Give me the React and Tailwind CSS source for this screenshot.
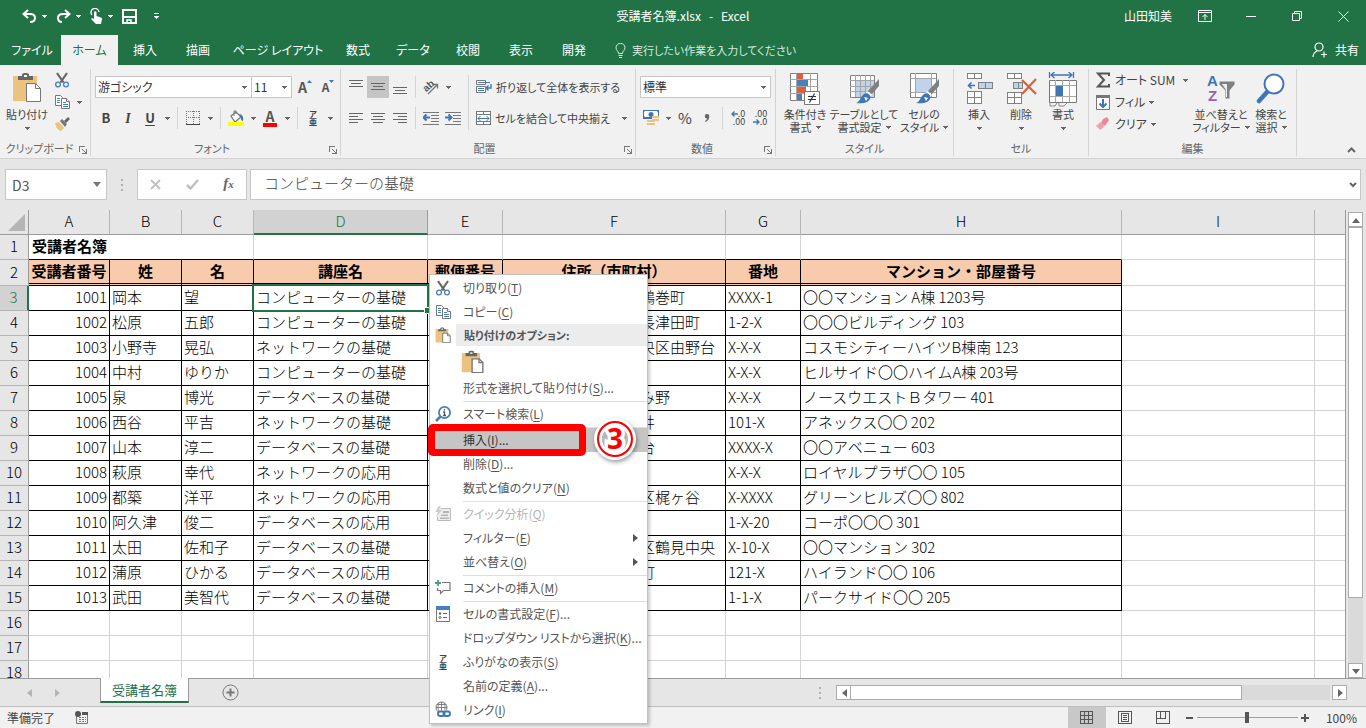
import clsx from "clsx";

const tabs = [
  { name: "ファイル", w: "w-[58px]" },
  { name: "ホーム", w: "w-[57px]", active: true },
  { name: "挿入", w: "w-[54px]" },
  { name: "描画", w: "w-[52px]" },
  { name: "ページ レイアウト", w: "w-[108px]" },
  { name: "数式", w: "w-[52px]" },
  { name: "データ", w: "w-[58px]" },
  { name: "校閲", w: "w-[52px]" },
  { name: "表示", w: "w-[54px]" },
  { name: "開発", w: "w-[52px]" },
];

const columns = [
  { id: "A", w: "w-[81px]" },
  { id: "B", w: "w-[72px]" },
  { id: "C", w: "w-[72px]" },
  { id: "D", w: "w-[174px]" },
  { id: "E", w: "w-[75px]" },
  { id: "F", w: "w-[223px]" },
  { id: "G", w: "w-[75px]" },
  { id: "H", w: "w-[321px]" },
  { id: "I", w: "w-[193px]" },
  { id: "", w: "w-auto" },
];

const headings = ["受講者番号", "姓", "名", "講座名", "郵便番号", "住所（市町村）", "番地", "マンション・部屋番号"];

const members = [
  [1001, "岡本", "望", "コンピューターの基礎", "", "東京都新宿区早稲田鶴巻町", "XXXX-1", "〇〇マンション A棟 1203号"],
  [1002, "松原", "五郎", "コンピューターの基礎", "", "神奈川県横浜市緑区長津田町", "1-2-X", "〇〇〇ビルディング 103"],
  [1003, "小野寺", "晃弘", "ネットワークの基礎", "", "神奈川県相模原市中央区由野台", "X-X-X", "コスモシティーハイツB棟南 123"],
  [1004, "中村", "ゆりか", "コンピューターの基礎", "", "", "X-X-X", "ヒルサイド〇〇ハイムA棟 203号"],
  [1005, "泉", "博光", "データベースの基礎", "", "神奈川県大和市つきみ野", "X-X-X", "ノースウエストＢタワー 401"],
  [1006, "西谷", "平吉", "ネットワークの基礎", "", "神奈川県大井町上大井", "101-X", "アネックス〇〇 202"],
  [1007, "山本", "淳二", "データベースの基礎", "", "神奈川県大和市緑野台", "XXXX-X", "〇〇アベニュー 603"],
  [1008, "萩原", "幸代", "ネットワークの応用", "", "", "X-X-X", "ロイヤルプラザ〇〇 105"],
  [1009, "都築", "洋平", "ネットワークの応用", "", "神奈川県川崎市高津区梶ヶ谷", "X-XXXX", "グリーンヒルズ〇〇 802"],
  [1010, "阿久津", "俊二", "データベースの応用", "", "", "1-X-20", "コーポ〇〇〇 301"],
  [1011, "太田", "佐和子", "データベースの基礎", "", "神奈川県横浜市鶴見区鶴見中央", "X-10-X", "〇〇マンション 302"],
  [1012, "蒲原", "ひかる", "データベースの応用", "", "神奈川県小田原市栄町", "121-X", "ハイランド〇〇 106"],
  [1013, "武田", "美智代", "データベースの基礎", "", "", "1-1-X", "パークサイド〇〇 205"],
];

const menu = [
  { label: "切り取り", k: "T", icon: <CutIcon /> },
  { label: "コピー", k: "C", icon: <CopyIcon /> },
  { header: "貼り付けのオプション:", icon: <PasteIcon size={16} /> },
  { paste: true },
  { label: "形式を選択して貼り付け", k: "S", dots: true },
  { sep: true },
  { label: "スマート検索", k: "L", icon: <SmartIcon /> },
  { sep: true },
  { label: "挿入", k: "I", dots: true, active: true },
  { label: "削除", k: "D", dots: true },
  { label: "数式と値のクリア", k: "N" },
  { sep: true },
  { label: "クイック分析", k: "Q", icon: <QuickIcon />, disabled: true },
  { label: "フィルター", k: "E", sub: true },
  { label: "並べ替え", k: "O", sub: true },
  { sep: true },
  { label: "コメントの挿入", k: "M", icon: <CommentIcon /> },
  { sep: true },
  { label: "セルの書式設定", k: "F", dots: true, icon: <FormatDialogIcon /> },
  { label: "ドロップダウン リストから選択", k: "K", dots: true },
  { label: "ふりがなの表示", k: "S", icon: <RubyIcon /> },
  { label: "名前の定義", k: "A", dots: true },
  { label: "リンク", k: "I", icon: <LinkIcon /> },
];

/* ---------- icons ---------- */

function Arrow({ className }) {
  return (
    <svg className={clsx("shrink-0", className)} width="5" height="3" viewBox="0 0 5 3" fill="currentColor" shapeRendering="crispEdges">
      <path d="M0 0h5v1H4v1H3v1H2V2H1V1H0z" />
    </svg>
  );
}

function Triangle({ dir = "left" }) {
  const d = { left: "M5 0v8L0 4z", right: "M0 0v8l5-4z", up: "M0 5h8L4 0z", down: "M0 0h8L4 5z" }[dir];
  return (
    <svg width="8" height="8" viewBox={dir === "left" || dir === "right" ? "-2 0 8 8" : "0 -2 8 8"} fill="currentColor">
      <path d={d} />
    </svg>
  );
}

function CutIcon() {
  return (
    <svg width="16" height="16" viewBox="0 0 16 16" fill="none">
      <path d="M3 1l6.5 9.5M13 1L6.500 10.500" stroke="#666" strokeWidth="2.2" />
      <circle cx="4" cy="12.500" r="2.400" stroke="#4a80b8" strokeWidth="1.300" />
      <circle cx="12" cy="12.500" r="2.400" stroke="#4a80b8" strokeWidth="1.300" />
    </svg>
  );
}

function CopyIcon() {
  return (
    <svg width="16" height="16" viewBox="0 0 16 16" fill="#fff">
      <path d="M1.500 1.500h5l2 2v8h-7z" stroke="#777" />
      <path d="M3 4.500h3M3 6.500h3M3 8.500h3" stroke="#4a80b8" />
      <path d="M7.500 4.500h5l3 3v7h-8z" stroke="#777" />
      <path d="M12.500 4.500v3h3" stroke="#777" />
      <path d="M9 8.500h3M9 10.500h5M9 12.500h5" stroke="#4a80b8" />
    </svg>
  );
}

function BrushIcon() {
  return (
    <svg width="17" height="16" viewBox="0 0 17 16">
      <path d="M1 7l4-1 5 6-3 3c-2 0-5-3-6-8z" fill="#ecc27f" />
      <path d="M6 5l2-2 5 5-2 3z" fill="#777" />
      <path d="M10 5l4-4 2 2-4 4z" fill="#666" />
    </svg>
  );
}

function PasteIcon({ size = 30 }) {
  return (
    <svg width={size} height={size} viewBox="0 0 30 30">
      <path d="M1 4h24v25H1z" fill="#ecc27f" />
      <path d="M6 8V4h4V2l2-1h3l2 1v2h4v4z" fill="#666" />
      <path d="M12 3h3v2h-3z" fill="#f1f1f1" />
      <path d="M14.500 11.500h9l5 5v13h-14z" fill="#fff" stroke="#777" strokeWidth={size > 24 ? 1 : 1.800} />
      <path d="M23.500 11.500v5h5" fill="none" stroke="#777" strokeWidth={size > 24 ? 1 : 1.800} />
    </svg>
  );
}

function SmartIcon() {
  return (
    <svg width="16" height="16" viewBox="0 0 16 16" fill="none">
      <circle cx="9.500" cy="6.500" r="5.600" stroke="#4a80b8" strokeWidth="1.800" />
      <path d="M5.500 10.500L1 15" stroke="#4a80b8" strokeWidth="2.600" />
      <path d="M9.500 5.500V10M9.500 3v1.500M8 6h1.500M8 9.500h3" stroke="#555" strokeWidth="1.300" />
    </svg>
  );
}

function QuickIcon() {
  return (
    <svg width="16" height="16" viewBox="0 0 16 16">
      <path d="M5.500 2.500h10v12h-13v-4" fill="#eee" stroke="#bbb" />
      <path d="M8 5h6v2H8zM6 8.500h7v1.500H6zM5 11.500h9V13H5z" fill="#b5b5b5" />
      <path d="M4 0L0 6h3l-2 5 6-7H4l2-4z" fill="#ccc" />
    </svg>
  );
}

function CommentIcon() {
  return (
    <svg width="16" height="16" viewBox="0 0 16 16" fill="none">
      <path d="M7 2.500h8v8H8.500L5.500 13.500v-3h-3V8" stroke="#777" strokeWidth="1.200" />
      <path d="M3 0v6M0 3h6" stroke="#4f9f7c" strokeWidth="1.800" />
    </svg>
  );
}

function FormatDialogIcon() {
  return (
    <svg width="16" height="16" viewBox="0 0 16 16">
      <path d="M1.500 1.500h13v14h-13z" fill="#fff" stroke="#777" />
      <path d="M1 0h14v4H1z" fill="#4a80b8" />
      <circle cx="5" cy="7.500" r="1.200" fill="#666" />
      <circle cx="5" cy="11.500" r="1" fill="#fff" stroke="#666" />
      <path d="M8 7.500h4M8 11.500h4" stroke="#666" />
    </svg>
  );
}

function RubyIcon() {
  return (
    <span className="flex flex-col items-center text-[8px] leading-[8px] font-bold text-[#444]">
      <span>ア</span>
      <span>亜</span>
    </span>
  );
}

function LinkIcon() {
  return (
    <svg width="16" height="17" viewBox="0 0 16 17" fill="none">
      <circle cx="6.500" cy="6.500" r="5.500" stroke="#777" />
      <path d="M1 6.500h11M6.500 1v9M2 3.500h9M4 2c-1.500 3-1.500 6 0 8M9 2c1.500 3 1.500 6 0 8" stroke="#777" strokeWidth=".9" />
      <rect x="2" y="9.500" width="14" height="6.500" rx="3" fill="#fff" />
      <rect x="3" y="10.500" width="6.500" height="4.500" rx="2.200" stroke="#3f76b5" strokeWidth="1.900" />
      <rect x="8.500" y="10.500" width="6.500" height="4.500" rx="2.200" stroke="#3f76b5" strokeWidth="1.900" />
    </svg>
  );
}

function Lines({ rows }) {
  return (
    <svg width="14" height="14" viewBox="0 0 14 14" shapeRendering="crispEdges" stroke="#666">
      {rows.map(([x, y, w]) => (
        <path key={y} d={`M${x} ${y + 0.5}h${w}`} />
      ))}
    </svg>
  );
}

function IndentIcon({ right }) {
  return (
    <svg width="16" height="14" viewBox="0 0 16 14" fill="none" stroke="#777" shapeRendering="crispEdges">
      <path d="M0 1.500h16M8 4.500h8M8 7.500h8M8 10.500h8M0 13.500h16" />
      <path d={right ? "M0 6.500h5M3.500 3.500l3 3-3 3" : "M7 6.500H2M3.500 3.500l-3 3 3 3"} stroke="#3f76b5" strokeWidth="2" shapeRendering="auto" />
    </svg>
  );
}

function OrientationIcon() {
  return (
    <svg width="18" height="18" viewBox="0 0 18 18">
      <path d="M6 16L15 7M11.500 6.500H15.500V10.500" fill="none" stroke="#777" strokeWidth="1.300" />
      <text x="2" y="12" fontSize="10" fontWeight="700" fill="#555" transform="rotate(-42 6 10)" fontFamily="Liberation Sans">ab</text>
    </svg>
  );
}

function WrapIcon() {
  return (
    <svg width="17" height="16" viewBox="0 0 17 16" fill="none">
      <path d="M1.500 1.500h9v4h-9zM1.500 7.500h9v6h-9z" stroke="#777" fill="#fff" />
      <path d="M3 3.500h12M3 9.500h6M3 11.500h6" stroke="#3f76b5" />
      <path d="M16 5v4h-4M13.500 6.500l-2.500 2.500 2.500 2.500" stroke="#3f76b5" strokeWidth="1.400" />
    </svg>
  );
}

function MergeIcon() {
  return (
    <svg width="16" height="16" viewBox="0 0 16 16" fill="none" shapeRendering="crispEdges">
      <path d="M1.500 1.500h14v13h-14zM1.500 4.500h14M1.500 11.500h14M8.500 1.500v3M8.500 11.500v3" stroke="#777" fill="#fff" />
      <path d="M3 8.500h11M5.500 6L3 8.500 5.500 11M11.500 6L14 8.500 11.500 11" stroke="#3f76b5" fill="none" shapeRendering="auto" />
    </svg>
  );
}

function CurrencyIcon() {
  return (
    <svg width="17" height="16" viewBox="0 0 17 16">
      <path d="M0 0h16v9H0z" fill="#3f76b5" />
      <path d="M2 1h12l1 2v4H2L1 6V2z" fill="#fff" />
      <circle cx="8" cy="4.500" r="2.500" fill="#3f76b5" />
      <path d="M9 6h7v5H9zM4 10h8v5H4z" fill="#ecc27f" />
      <path d="M9 8.500h7M4 12.500h8" stroke="#fff" strokeWidth=".8" />
    </svg>
  );
}

function DecimalIcon({ dec }) {
  return (
    <span className="flex flex-col text-[9px] leading-[8px] text-[#444]">
      <span className={clsx("flex items-center", dec ? "justify-end" : "justify-between")}>
        {!dec && <SmallArrow />}
        {dec ? ".00" : ".0"}
      </span>
      <span className={clsx("flex items-center", dec ? "justify-between" : "justify-end")}>
        {dec && <SmallArrow right />}
        {dec ? ".0" : ".00"}
      </span>
    </span>
  );
}

function SmallArrow({ right }) {
  return (
    <svg width="7" height="6" viewBox="0 0 7 6" fill="none" stroke="#3f76b5" strokeWidth="1.400">
      <path d={right ? "M0 3h6M3.500.5L6 3 3.500 5.500" : "M7 3H1M3.500.5L1 3l2.500 2.500"} />
    </svg>
  );
}

function CondIcon() {
  return (
    <svg width="32" height="34" viewBox="0 0 32 34">
      <path d="M1.500 1.500h27v27h-27z" fill="#fff" stroke="#808080" />
      <path d="M1 7.500h28M1 14.500h28M1 21.500h28M7.500 1v28M21.500 1v28" stroke="#a5a5a5" />
      <path d="M8 2h6v5H8zM8 15h9v6H8z" fill="#dd5f3d" />
      <path d="M8 8h11v6H8zM8 22h5v6H8z" fill="#4a80b8" />
      <path d="M15.500 19.500h15v13h-15z" fill="#fff" stroke="#777" />
      <path d="M19 24.500h8M19 27.500h8M25.500 21.500l-5 9" stroke="#333" strokeWidth="1.200" />
    </svg>
  );
}

function TableBrushIcon({ cellStyle }) {
  return (
    <svg width="32" height="32" viewBox="0 0 32 32">
      <path d={cellStyle ? "M2.500 1.500h26v24h-26z" : "M2.500 3.500h24v22h-24z"} fill="#fff" stroke="#808080" />
      {cellStyle ? (
        <>
          <path d="M8 7h15v14H8z" fill="#bfd3ea" />
          <path d="M7.500 1v24M23.500 1v24M2 6.500h26M2 20.500h26" stroke="#a5a5a5" />
        </>
      ) : (
        <>
          <path d="M8 9h18v16H8z" fill="#bfd3ea" />
          <path d="M7.500 3v22M12.500 3v22M17.500 3v22M22.500 3v22M2 8.500h24M2 14.500h24M2 19.500h24" stroke="#a5a5a5" />
        </>
      )}
      <path d="M31 7v7l-7 8-4-3z" fill="#808080" />
      <path d="M19 19l5 4-2 2-4-4z" fill="#fff" />
      <path d="M8 31c4-1 4-6 8-9 3-2 8 1 6 5-2 4-8 5-14 4z" fill="#3f76b5" />
      <path d="M16 25l4 1-2 3z" fill="#fff" />
    </svg>
  );
}

function InsertIcon() {
  return (
    <svg width="30" height="32" viewBox="0 0 30 32" fill="#fff" stroke="#808080" shapeRendering="crispEdges">
      <path d="M3.500 1.500h14v5h-14zM10.500 1.500v5M3.500 19.500h14v12h-14zM10.500 19.500v12M3.500 25.500h14" />
      <path d="M14.500 10.500h14v6h-14zM21.500 10.500v6" fill="#bfd3ea" />
      <path d="M11 13.500H5M7.500 10.500l-3 3 3 3" fill="none" stroke="#3f76b5" strokeWidth="1.600" shapeRendering="auto" />
    </svg>
  );
}

function DeleteIcon() {
  return (
    <svg width="32" height="32" viewBox="0 0 32 32" fill="#fff" stroke="#808080">
      <g shapeRendering="crispEdges">
        <path d="M2.500 1.500h14v5h-14zM9.500 1.500v5M2.500 20.500h14v11h-14zM9.500 20.500v11M2.500 25.500h14" />
        <path d="M8.500 10.500h9v6h-9zM13.500 10.500v6" fill="#bfd3ea" />
      </g>
      <path d="M17 8l14 14M31 7L17 22" fill="none" stroke="#dd5f3d" strokeWidth="2.200" />
    </svg>
  );
}

function FormatIcon() {
  return (
    <svg width="30" height="35" viewBox="0 0 30 35" fill="none">
      <path d="M1.500 0v6M25.500 0v6M3 3h21M6.500 0L3 3l3.500 3M20.500 0L24 3l-3.500 3" stroke="#3f76b5" strokeWidth="1.300" />
      <path d="M1.500 8.500h27v22h-27z" fill="#fff" stroke="#777" />
      <path d="M7.500 8v22M14.500 8v22M21.500 8v22M2 13.500h26M2 24.500h26" stroke="#aaa" />
      <path d="M8 14h7v10H8z" fill="#3f76b5" />
      <path d="M2 31v3h5l2-3M11 31v3h5l3-3" stroke="#888" />
    </svg>
  );
}

function SortIcon() {
  return (
    <svg width="30" height="34" viewBox="0 0 30 34">
      <text x="1" y="14" fontSize="15" fontWeight="700" fill="#3f76b5" fontFamily="Liberation Sans">A</text>
      <text x="2" y="29" fontSize="15" fontWeight="700" fill="#9a5fb8" fontFamily="Liberation Sans">Z</text>
      <path d="M13.500 9.500h15v3l-5 6v8h-4v-8l-6-6z" fill="#808080" />
      <path d="M16 12h5v13h-1v-7z" fill="#eee" />
    </svg>
  );
}

function FindIcon() {
  return (
    <svg width="30" height="32" viewBox="0 0 30 32">
      <path d="M12 19L3 29" stroke="#3f76b5" strokeWidth="4.500" strokeLinecap="round" />
      <circle cx="18" cy="12" r="9.500" fill="#fff" stroke="#3f76b5" strokeWidth="2" />
    </svg>
  );
}

/* ---------- ribbon parts ---------- */

function Tool({ children, label, active }) {
  return (
    <button aria-label={label} className={clsx("flex h-[22px] w-[22px] shrink-0 items-center justify-center", active && "bg-[#c5c5c5]")}>
      {children}
    </button>
  );
}

function Drop({ label }) {
  return (
    <button aria-label={label} className="flex h-[22px] w-3 shrink-0 items-center justify-center text-[#666]">
      <Arrow />
    </button>
  );
}

function Sep() {
  return <div className="mx-1 h-[22px] w-px shrink-0 bg-[#d4d4d4]" />;
}

function Group({ title, className, launcher, children }) {
  return (
    <section className={clsx("flex shrink-0 flex-col border-r border-[#d4d4d4]", className)}>
      <div className="flex h-[71px] items-start">{children}</div>
      <div className="flex h-4 items-center text-[#666]">
        <span className="flex-1 text-center text-[11px] leading-4">{title}</span>
        {launcher && (
          <button aria-label={`${title}の設定`} className="mr-[3px] pt-1">
            <svg width="8" height="8" viewBox="0 0 8 8" fill="none" stroke="#777" shapeRendering="crispEdges">
              <path d="M.5 6V.5H6M3 3l4 4M7.500 3v4.500H3" />
            </svg>
          </button>
        )}
      </div>
    </section>
  );
}

function Big({ icon, lines, className, drop = "inline" }) {
  return (
    <button className={clsx("flex shrink-0 flex-col items-center pt-[3px] text-[#444]", className)}>
      <span className="flex h-9 items-start justify-center">{icon}</span>
      {lines.map((t, i) => (
        <span key={t} className="flex h-[13px] items-center gap-1 text-[11px] leading-[13px] whitespace-nowrap">
          {t}
          {drop === "inline" && i === lines.length - 1 && <Arrow className="text-[#666]" />}
        </span>
      ))}
      {drop === "below" && <Arrow className="mt-[6px] text-[#666]" />}
    </button>
  );
}

function Combo({ label, value, className }) {
  return (
    <div className={clsx("relative shrink-0", className)}>
      <select aria-label={label} className="block h-[22px] w-full appearance-none border border-[#c6c6c6] bg-white pl-[2px] text-[12px] leading-[18px] text-[#333]">
        <option>{value}</option>
      </select>
      <Arrow className="pointer-events-none absolute top-[10px] right-[5px] text-[#666]" />
    </div>
  );
}

function Ribbon() {
  return (
    <div className="flex h-[94px] shrink-0 border-b border-[#d2d2d2] bg-[#f1f1f1] pt-1 pb-[2px] text-[#444]">
      <Group title="クリップボード" launcher className="w-[91px]">
        <Big className="ml-1 w-[46px]" icon={<PasteIcon />} lines={["貼り付け"]} drop="below" />
        <div className="flex flex-col pl-[1px]">
          <Tool label="切り取り"><CutIcon /></Tool>
          <div className="flex">
            <Tool label="コピー"><CopyIcon /></Tool>
            <Drop label="コピーのオプション" />
          </div>
          <Tool label="書式のコピー/貼り付け"><BrushIcon /></Tool>
        </div>
      </Group>

      <Group title="フォント" launcher className="w-[250px] pl-1">
        <div className="flex flex-col gap-[9px] pt-[7px]">
          <div className="flex">
            <Combo label="フォント" value="游ゴシック" className="w-[157px]" />
            <Combo label="フォント サイズ" value="11" className="-ml-px w-[41px]" />
            <button aria-label="フォント サイズの拡大" className="flex h-[22px] w-[26px] items-center justify-center text-[14px] font-bold text-[#555]">
              A<svg className="mb-3" width="5" height="3" viewBox="0 0 5 3" fill="#3f76b5"><path d="M0 3L2.500 0 5 3z" /></svg>
            </button>
            <button aria-label="フォント サイズの縮小" className="flex h-[22px] w-[20px] items-center justify-center text-[12px] font-bold text-[#555]">
              A<svg className="mb-3" width="5" height="3" viewBox="0 0 5 3" fill="#3f76b5"><path d="M0 0L2.500 3 5 0z" /></svg>
            </button>
          </div>
          <div className="flex items-center text-[13px]">
            <Tool label="太字"><b>B</b></Tool>
            <Tool label="斜体"><b className="font-['Liberation_Serif'] text-[14px] italic">I</b></Tool>
            <Tool label="下線"><b className="underline underline-offset-2">U</b></Tool>
            <Drop label="下線の種類" />
            <Sep />
            <Tool label="罫線">
              <svg width="14" height="14" viewBox="0 0 14 14" fill="none" stroke="#777" shapeRendering="crispEdges">
                <path d="M0 .5h14M.5 0v13M13.500 0v13M7 0v13M0 6.500h14" strokeDasharray="1 1" />
                <path d="M0 13.500h14" stroke="#444" />
              </svg>
            </Tool>
            <Drop label="罫線の種類" />
            <Sep />
            <Tool label="塗りつぶしの色">
              <svg width="17" height="16" viewBox="0 0 17 16">
                <path d="M3 6l5-4 5 5-6 5z" fill="#fff" stroke="#777" strokeWidth="1.200" />
                <path d="M6 6V1h2v3" fill="none" stroke="#777" />
                <path d="M11 4c3 0 5 3 4 7l-2-1V7z" fill="#3f76b5" />
                <path d="M0 12h16v4H0z" fill="#ff0" />
              </svg>
            </Tool>
            <Drop label="塗りつぶしの色の選択" />
            <Tool label="フォントの色">
              <span className="border-b-4 border-[#f00] px-[3px] text-[14px] leading-[13px] font-bold text-[#555]">A</span>
            </Tool>
            <Drop label="フォントの色の選択" />
            <Sep />
            <Tool label="ふりがなの表示/非表示"><RubyIcon /></Tool>
            <Drop label="ふりがなのオプション" />
          </div>
        </div>
      </Group>

      <Group title="配置" launcher className="w-[295px] pl-1">
        <div className="flex flex-col gap-[9px] pt-[7px]">
          <div className="flex items-center">
            <Tool label="上揃え"><Lines rows={[[0, 0, 14], [2, 3, 10], [0, 6, 14]]} /></Tool>
            <Tool label="上下中央揃え" active><Lines rows={[[0, 3, 14], [2, 6, 10], [0, 9, 14]]} /></Tool>
            <Tool label="下揃え"><Lines rows={[[0, 7, 14], [2, 10, 10], [0, 13, 14]]} /></Tool>
            <Sep />
            <Tool label="方向"><OrientationIcon /></Tool>
            <Drop label="方向の選択" />
          </div>
          <div className="flex items-center">
            <Tool label="左揃え"><Lines rows={[[0, 2, 14], [0, 5, 9], [0, 8, 14], [0, 11, 9]]} /></Tool>
            <Tool label="中央揃え"><Lines rows={[[0, 2, 14], [2, 5, 10], [0, 8, 14], [2, 11, 10]]} /></Tool>
            <Tool label="右揃え"><Lines rows={[[0, 2, 14], [5, 5, 9], [0, 8, 14], [5, 11, 9]]} /></Tool>
            <Sep />
            <Tool label="インデントを減らす"><IndentIcon /></Tool>
            <Tool label="インデントを増やす"><IndentIcon right /></Tool>
          </div>
        </div>
        <div className="mx-1 mt-[6px] h-[55px] w-px bg-[#d4d4d4]" />
        <div className="flex flex-1 flex-col gap-[9px] pt-[7px] text-[11px] whitespace-nowrap">
          <button className="flex h-[22px] items-center gap-1 pl-[2px]"><WrapIcon />折り返して全体を表示する</button>
          <div className="flex items-center justify-between">
            <button className="flex h-[22px] items-center gap-1 pl-[2px]"><MergeIcon />セルを結合して中央揃え</button>
            <span className="mr-[5px] flex"><Drop label="セルの結合のオプション" /></span>
          </div>
        </div>
      </Group>

      <Group title="数値" launcher className="w-[140px] pl-1">
        <div className="flex flex-col gap-[9px] pt-[7px]">
          <Combo label="表示形式" value="標準" className="w-[131px]" />
          <div className="flex items-center">
            <Tool label="通貨表示形式"><CurrencyIcon /></Tool>
            <Drop label="通貨の選択" />
            <Tool label="パーセント スタイル"><span className="text-[15px] text-[#444]">%</span></Tool>
            <Tool label="桁区切りスタイル">
              <svg width="6" height="8" viewBox="0 0 6 8" fill="#666"><path d="M3 0a2.300 2.300 0 0 1 2.300 2.500C5.300 5 4 7 1.500 8L1 7c1.200-.7 2-1.500 2-2.500A2.200 2.200 0 0 1 3 0z" /></svg>
            </Tool>
            <Sep />
            <Tool label="小数点以下の表示桁数を増やす"><DecimalIcon /></Tool>
            <Tool label="小数点以下の表示桁数を減らす"><DecimalIcon dec /></Tool>
          </div>
        </div>
      </Group>

      <Group title="スタイル" className="w-[178px]">
        <Big className="ml-1 w-[50px]" icon={<CondIcon />} lines={["条件付き", "書式"]} />
        <Big className="w-[68px]" icon={<TableBrushIcon />} lines={["テーブルとして", "書式設定"]} />
        <Big className="w-[52px]" icon={<TableBrushIcon cellStyle />} lines={["セルの", "スタイル"]} />
      </Group>

      <Group title="セル" className="w-[135px]">
        <Big className="ml-1 w-[42px]" icon={<InsertIcon />} lines={["挿入"]} drop="below" />
        <Big className="w-[42px]" icon={<DeleteIcon />} lines={["削除"]} drop="below" />
        <Big className="w-[42px]" icon={<FormatIcon />} lines={["書式"]} drop="below" />
      </Group>

      <Group title="編集" className="w-[208px]">
        <div className="flex w-[104px] flex-col pl-[6px] text-[12px] whitespace-nowrap">
          <button className="flex h-[22px] items-center gap-1">
            <svg width="16" height="16" viewBox="0 0 16 16" fill="none" stroke="#555" strokeWidth="2">
              <path d="M14 4V1.500H3L9 8l-6 6.500h11V12" />
            </svg>
            オート SUM
            <Arrow className="ml-1 text-[#666]" />
          </button>
          <button className="flex h-[22px] items-center gap-1">
            <svg width="16" height="16" viewBox="0 0 16 16" fill="none">
              <path d="M1.500 1.500h13v14h-13z" fill="#fff" stroke="#777" />
              <path d="M1 1h14v3H1z" fill="#777" />
              <path d="M8 5v8M4.500 9.500L8 13l3.500-3.500" stroke="#3f76b5" strokeWidth="2" />
            </svg>
            フィル
            <Arrow className="text-[#666]" />
          </button>
          <button className="flex h-[22px] items-center gap-1">
            <svg width="16" height="16" viewBox="0 0 16 16">
              <path d="M8 3l4-2 2 3-4 6-4-3z" fill="#e8879c" />
              <path d="M5.500 6l4 4-4 4L1 10z" fill="#eda0b0" />
            </svg>
            クリア
            <Arrow className="text-[#666]" />
          </button>
        </div>
        <Big className="w-[56px]" icon={<SortIcon />} lines={["並べ替えと", "フィルター"]} />
        <Big className="w-[44px]" icon={<FindIcon />} lines={["検索と", "選択"]} />
      </Group>

      <button aria-label="リボンを折りたたむ" className="mr-[10px] mb-[3px] ml-auto self-end">
        <svg width="9" height="6" viewBox="0 0 9 6" fill="none" stroke="#666" strokeWidth="2"><path d="M1 5l3.500-3.500L8 5" /></svg>
      </button>
    </div>
  );
}

/* ---------- window chrome ---------- */

function TitleBar() {
  return (
    <header className="shrink-0 bg-[#217346] text-[12px] text-white">
      <div className="grid h-[35px] grid-cols-[1fr_auto_1fr] items-center pb-[3px]">
        <div className="flex items-center gap-[5px] pl-[22px]">
          <button aria-label="元に戻す">
            <svg width="15" height="15" viewBox="0 0 15 15" fill="none" stroke="#fff" strokeWidth="2"><path d="M6 1L1.500 5 6 9M2 5h6c4 0 5 2 5 4s-1 4-5 4" /></svg>
          </button>
          <Arrow />
          <button aria-label="やり直し" className="ml-1">
            <svg width="15" height="15" viewBox="0 0 15 15" fill="none" stroke="#fff" strokeWidth="2"><path d="M9 1l4.500 4L9 9M13 5H7C3 5 2 7 2 9s1 4 4 4" /></svg>
          </button>
          <Arrow />
          <button aria-label="タッチ/マウス モードの切り替え" className="ml-1">
            <svg width="13" height="16" viewBox="0 0 13 16" fill="#fff">
              <path d="M2 7a4 4 0 1 1 7-3" fill="none" stroke="#fff" strokeWidth="1.300" />
              <path d="M4 4.500a1.200 1.200 0 0 1 2.500 0V8l4.500 1.500c1 .5 1 1 1 2L11 16H6L1 11l1-1 2 1z" />
            </svg>
          </button>
          <Arrow />
          <button aria-label="上書き保存" className="ml-1">
            <svg width="15" height="15" viewBox="0 0 15 15" fill="none" stroke="#fff" strokeWidth="2"><path d="M1 1h13v13H1zM1 8h13" /><path d="M5 14v-3h4v3" strokeWidth="1.500" /></svg>
          </button>
          <button aria-label="クイック アクセス ツール バーのユーザー設定" className="ml-3 flex flex-col items-center gap-[2px]">
            <span className="h-px w-[5px] bg-white" />
            <Arrow />
          </button>
        </div>
        <h1 className="flex gap-2 text-[12px]">
          <span>受講者名簿.xlsx</span>
          <span>-</span>
          <span>Excel</span>
        </h1>
        <div className="flex items-center justify-end">
          <span className="mr-[10px]">山田知美</span>
          <button aria-label="リボンの表示オプション" className="flex w-[46px] justify-center">
            <svg width="14" height="12" viewBox="0 0 14 12" fill="none" stroke="#fff"><path d="M.5.5h13v11H.5zM.5 2.500h13M7 10V4.500M4.500 7L7 4.500 9.500 7" /></svg>
          </button>
          <button aria-label="最小化" className="flex w-[46px] justify-center">
            <span className="h-px w-[10px] bg-white" />
          </button>
          <button aria-label="元に戻す (縮小)" className="flex w-[46px] justify-center">
            <svg width="10" height="10" viewBox="0 0 10 10" fill="none" stroke="#fff"><path d="M.5 2.500h7v7h-7zM2.500 2.500v-2h7v7h-2" /></svg>
          </button>
          <button aria-label="閉じる" className="flex w-[46px] justify-center">
            <svg width="11" height="11" viewBox="0 0 11 11" fill="none" stroke="#fff"><path d="M.5.5l10 10M10.500.5l-10 10" /></svg>
          </button>
        </div>
      </div>
      <nav className="flex h-[30px] items-center">
        {tabs.map((t, i) => (
          <button
            key={t.name}
            className={clsx(
              "flex h-full shrink-0 items-center justify-center whitespace-nowrap",
              t.w,
              t.active && "bg-[#f1f1f1] text-[#217346]",
              i === 0 && "ml-[3px]",
            )}
          >
            {t.name}
          </button>
        ))}
        <label className="ml-[15px] flex items-center gap-[6px]">
          <svg width="11" height="15" viewBox="0 0 11 15" fill="none" stroke="#d7e8df">
            <path d="M3.500 10.500C3.500 8 1 7.500 1 4.800a4.400 4.400 0 0 1 9 0C10 7.500 7.500 8 7.500 10.500zM3.500 12.500h4M4 14.500h3" />
          </svg>
          <input
            aria-label="操作アシスト"
            placeholder="実行したい作業を入力してください"
            className="w-[200px] bg-transparent text-[11px] placeholder:text-[#d7e8df]"
          />
        </label>
        <button className="mr-[7px] ml-auto flex items-center gap-2">
          <svg width="15" height="16" viewBox="0 0 15 16" fill="none" stroke="#fff" strokeWidth="1.200">
            <circle cx="7" cy="5" r="4" />
            <path d="M1 15c0-3.500 2-5 4-6M9 12.500h6M12 9.500v6" />
          </svg>
          共有
        </button>
      </nav>
    </header>
  );
}

function FormulaBar() {
  return (
    <div className="flex h-[51px] shrink-0 bg-[#e6e6e6] px-[5px] pt-[10px] pb-[10px] text-[#555]">
      <div className="relative w-[102px]">
        <input aria-label="名前ボックス" defaultValue="D3" className="h-[31px] w-full border border-[#c6c6c6] bg-white pt-px pl-[6px] text-[14px]" />
        <svg className="absolute top-[13px] right-[6px]" width="8" height="5" viewBox="0 0 8 5" fill="#777"><path d="M0 0h8L4 5z" /></svg>
      </div>
      <div className="flex w-[30px] flex-col items-center justify-center gap-[3px]">
        <span className="size-[2px] bg-[#b0b0b0]" />
        <span className="size-[2px] bg-[#b0b0b0]" />
        <span className="size-[2px] bg-[#b0b0b0]" />
      </div>
      <div className="mr-[3px] flex h-[31px] w-[110px] items-center justify-around border border-[#c6c6c6] bg-white">
        <button aria-label="キャンセル">
          <svg width="11" height="11" viewBox="0 0 11 11" fill="none" stroke="#c0c0c0" strokeWidth="2"><path d="M1 1l9 9M10 1l-9 9" /></svg>
        </button>
        <button aria-label="入力">
          <svg width="13" height="11" viewBox="0 0 13 11" fill="none" stroke="#c0c0c0" strokeWidth="2.500"><path d="M1 6l3.500 3.500L12 1" /></svg>
        </button>
        <button aria-label="関数の挿入" className="pb-[2px] font-['Liberation_Serif'] text-[15px] leading-4 font-bold text-[#666] italic">
          f<span className="text-[11px]">x</span>
        </button>
      </div>
      <div className="relative min-w-0 flex-1">
        <input aria-label="数式バー" defaultValue="コンピューターの基礎" className="h-[31px] w-full border border-[#c6c6c6] bg-white pb-1 pl-[13px] text-[15px] font-light text-[#444] [font-feature-settings:normal]" />
        <svg className="absolute top-[13px] right-1" width="8" height="6" viewBox="0 0 8 6" fill="none" stroke="#666" strokeWidth="2"><path d="M1 1l3 3 3-3" /></svg>
      </div>
    </div>
  );
}

/* ---------- sheet ---------- */

function RowHead({ n, active }) {
  return (
    <th
      className={clsx(
        "border-b pb-[2px] font-light",
        active ? "border-r-2 border-r-[#217346] border-b-[#b5b5b5] bg-[#d2d2d2] text-[#217346]" : "border-r border-r-[#9b9b9b] border-b-[#b5b5b5] bg-[#e6e6e6]",
      )}
    >
      {n}
    </th>
  );
}

function Sheet() {
  const grid = "border-r border-b border-[#d4d4d4]";
  return (
    <div className="min-w-0 flex-1 overflow-hidden border-r border-[#9b9b9b] bg-white">
      <table className="w-full table-fixed border-separate border-spacing-0 text-[15px] leading-5 whitespace-nowrap text-black [font-feature-settings:normal]">
        <colgroup>
          <col className="w-[29px]" />
          {columns.map((c, i) => (
            <col key={i} className={c.w} />
          ))}
        </colgroup>
        <thead>
          <tr className="h-[25px] bg-[#e6e6e6]">
            <th className="border-r border-b border-[#9b9b9b]">
              <svg className="ml-2" width="17" height="17" viewBox="0 0 17 17" fill="#b5b5b5"><path d="M17 0v17H0z" /></svg>
            </th>
            {columns.map((c, i) => (
              <th
                key={i}
                className={clsx(
                  "border-r pb-[2px] font-light",
                  c.id === "D" ? "border-b-2 border-r-[#9b9b9b] border-b-[#217346] bg-[#d2d2d2] text-[#217346]" : "border-b border-r-[#b5b5b5] border-b-[#9b9b9b]",
                  !c.id && "border-r-0",
                )}
              >
                {c.id}
              </th>
            ))}
          </tr>
        </thead>
        <tbody>
          <tr className="h-[25px]">
            <RowHead n={1} />
            <td colSpan={3} className="border-r border-b border-r-[#d4d4d4] border-b-black pb-[2px] pl-[3px] font-bold">受講者名簿</td>
            {columns.slice(3).map((c, i) => (
              <td key={i} className={clsx("border-r border-b border-r-[#d4d4d4]", i < 5 ? "border-b-black" : "border-b-[#d4d4d4]", !c.id && "border-r-0")} />
            ))}
          </tr>
          <tr className="h-[26px]">
            <RowHead n={2} />
            {headings.map((h) => (
              <th key={h} className="border-r border-b-3 border-double border-black bg-[#f8cbad] pb-[2px] font-bold">
                {h}
              </th>
            ))}
            <td className={grid} />
            <td className="border-b border-[#d4d4d4]" />
          </tr>
          {members.map((row, r) => (
            <tr key={row[0]} className="h-[25px]">
              <RowHead n={r + 3} active={r === 0} />
              {row.map((v, c) => (
                <td
                  key={c}
                  className={clsx(
                    "border-r border-b border-black pb-[2px] pl-[2px] font-light",
                    c === 0 && "pr-[2px] text-right",
                    r === 0 && c === 3 && "relative",
                  )}
                >
                  {v}
                  {r === 0 && c === 3 && (
                    <span className="absolute -inset-[2px] border-2 border-[#217346]">
                      <span className="absolute -right-[3px] -bottom-[3px] size-[5px] bg-[#217346] outline outline-white" />
                    </span>
                  )}
                </td>
              ))}
              <td className={grid} />
              <td className="border-b border-[#d4d4d4]" />
            </tr>
          ))}
          {[16, 17, 18].map((n) => (
            <tr key={n} className="h-[25px]">
              <RowHead n={n} />
              {columns.map((c, i) => (
                <td key={i} className={clsx(grid, !c.id && "border-r-0")} />
              ))}
            </tr>
          ))}
        </tbody>
      </table>
    </div>
  );
}

function ScrollButton({ dir, label }) {
  return (
    <button aria-label={label} className="flex size-[15px] shrink-0 items-center justify-center border border-[#ababab] bg-white text-[#666]">
      <Triangle dir={dir} />
    </button>
  );
}

function SheetTabs() {
  return (
    <div className="flex h-[29px] shrink-0 items-start border-t border-b border-t-[#9b9b9b] border-b-[#c0c0c0] bg-[#e6e6e6]">
      <div className="flex w-[100px] items-center gap-5 self-center pl-[25px] text-[#b5b5b5]">
        <button aria-label="前のシート"><Triangle dir="left" /></button>
        <button aria-label="次のシート"><Triangle dir="right" /></button>
      </div>
      <button className="-mt-px h-[25px] border-x border-b-2 border-x-[#9b9b9b] border-b-[#217346] bg-white px-[11px] text-[13px] text-[#217346]">受講者名簿</button>
      <button aria-label="新しいシート" className="ml-[33px] self-center">
        <svg width="17" height="17" viewBox="0 0 17 17" fill="none" stroke="#777"><circle cx="8.500" cy="8.500" r="7.500" /><path d="M8.500 4.500v8M4.500 8.500h8" strokeWidth="2" /></svg>
      </button>
      <div className="ml-auto flex items-center self-center">
        <div className="mr-[15px] flex flex-col gap-[3px]">
          <span className="size-[2px] bg-[#b0b0b0]" />
          <span className="size-[2px] bg-[#b0b0b0]" />
          <span className="size-[2px] bg-[#b0b0b0]" />
        </div>
        <ScrollButton dir="left" label="左へスクロール" />
        <div className="mr-[2px] -ml-px flex h-[15px] w-[480px] bg-[#dadada]">
          <div className="w-[392px] border border-[#ababab] bg-white" />
        </div>
        <ScrollButton dir="right" label="右へスクロール" />
        <div className="w-[19px]" />
      </div>
    </div>
  );
}

function StatusBar() {
  return (
    <footer className="flex h-[21px] shrink-0 items-center bg-[#f1f1f1] text-[12px] text-[#444]">
      <span className="ml-[7px]">準備完了</span>
      <button aria-label="マクロの記録" className="ml-5">
        <svg width="14" height="13" viewBox="0 0 14 13" fill="none">
          <path d="M1.500 5v7.500h11V1.500H7" stroke="#777" />
          <circle cx="3" cy="3" r="3" fill="#555" />
          <path d="M7 1h6v3H7z" fill="#555" />
          <path d="M4 6.500h7M4 8.500h7M4 10.500h7" stroke="#777" strokeDasharray="2 1" />
        </svg>
      </button>
      <div className="ml-auto flex h-full items-center">
        <button aria-label="標準" className="flex h-full w-[38px] items-center justify-center bg-[#c8c8c8]">
          <svg width="13" height="13" viewBox="0 0 13 13" fill="none" stroke="#555" shapeRendering="crispEdges"><path d="M.5.5h12v12H.5zM4.500 0v13M8.500 0v13M0 4.500h13M0 8.500h13" /></svg>
        </button>
        <button aria-label="ページ レイアウト" className="flex w-[38px] justify-center">
          <svg width="14" height="13" viewBox="0 0 14 13" fill="none" stroke="#555" shapeRendering="crispEdges"><path d="M.5.5h13v12H.5zM3.500 2.500h7v8h-7zM5 4.500h4M5 6.500h4M5 8.500h4" /></svg>
        </button>
        <button aria-label="改ページ プレビュー" className="flex w-[38px] justify-center">
          <svg width="14" height="13" viewBox="0 0 14 13" fill="none" stroke="#555" shapeRendering="crispEdges"><path d="M.5.5h13v12H.5zM4.500 0v7.500M9.500 0v7.500M0 7.500h9" /></svg>
        </button>
        <button aria-label="縮小" className="ml-1 flex h-4 w-[11px] items-center"><span className="h-[2px] w-[7px] bg-[#555]" /></button>
        <input
          type="range"
          aria-label="ズーム"
          defaultValue="50"
          className="h-[11px] w-[101px] appearance-none bg-[linear-gradient(#a0a0a0,#a0a0a0)] bg-[length:100%_1px] bg-center bg-no-repeat [&::-webkit-slider-thumb]:h-[11px] [&::-webkit-slider-thumb]:w-1 [&::-webkit-slider-thumb]:appearance-none [&::-webkit-slider-thumb]:bg-[#555]"
        />
        <button aria-label="拡大" className="ml-[3px] flex w-2">
          <svg width="8" height="8" viewBox="0 0 8 8" stroke="#555" strokeWidth="2"><path d="M4 0v8M0 4h8" /></svg>
        </button>
        <span className="mr-[9px] ml-[17px]">100%</span>
      </div>
    </footer>
  );
}

function ContextMenu() {
  return (
    <div role="menu" className="absolute top-[274px] left-[429px] w-[219px] border border-[#c0c0c0] bg-white py-px text-[12px] text-[#555] shadow-[2px_2px_3px_rgba(0,0,0,0.2)]">
      {menu.map((m, i) => {
        if (m.sep) return <div key={i} className="ml-[33px] h-[2px] border-b border-[#dcdfe2]" />;
        if (m.header)
          return (
            <div key={i} className="flex h-[22px] items-center">
              <span className="flex w-[26px] justify-center">{m.icon}</span>
              <span className="flex h-full flex-1 items-center bg-[#ececec] pl-2 text-[11px] font-bold">{m.header}</span>
            </div>
          );
        if (m.paste)
          return (
            <button key={i} aria-label="貼り付け" className="ml-[31px] flex h-[30px] items-center pt-px">
              <PasteIcon size={23} />
            </button>
          );
        return (
          <button
            key={i}
            role="menuitem"
            className={clsx("flex h-6 w-full items-center pb-px text-left", m.active && "bg-[#c5c5c5] text-[#333]", m.disabled && "text-[#b5b5b5]")}
          >
            <span className="flex w-[26px] shrink-0 justify-center">{m.icon}</span>
            <span className="ml-[7px] flex-1 whitespace-nowrap">
              {m.label}(<u className="underline-offset-2">{m.k}</u>){m.dots && "..."}
            </span>
            {m.sub && <span className="mr-2"><Triangle dir="right" /></span>}
          </button>
        );
      })}
    </div>
  );
}

// Step marker laid over the 挿入 item
function StepMarker() {
  return (
    <>
      <div className="pointer-events-none absolute top-[424px] left-[428px] h-8 w-[158px] rounded-[5px] border-[7px] border-[#f00]" />
      <div className="pointer-events-none absolute top-[418px] left-[594px] flex size-[42px] items-center justify-center rounded-full bg-white p-[3px] shadow-[1px_2px_4px_rgba(0,0,0,0.4)]">
        <div className="flex size-full items-center justify-center overflow-hidden rounded-full border-2 border-[#f00] bg-[#b5b5b5] shadow-[inset_0_0_0_3px_#fff]">
          <span className="pb-[2px] font-['Noto_Sans'] text-[28px] leading-none font-bold text-[#f00] [-webkit-text-stroke:7px_#fff] [paint-order:stroke_fill]">3</span>
        </div>
      </div>
    </>
  );
}

export default function App() {
  return (
    <div className="relative flex h-screen flex-col overflow-hidden bg-[#e6e6e6] font-['Noto_Sans_CJK_JP',sans-serif] [font-feature-settings:'palt']">
      <TitleBar />
      <Ribbon />
      <FormulaBar />
      <main className="flex min-h-0 flex-1">
        <Sheet />
        <div className="mr-[3px] ml-[2px] flex w-[15px] shrink-0 flex-col pt-[2px]">
          <ScrollButton dir="up" label="上へスクロール" />
          <div className="flex flex-1 flex-col bg-[#dadada]">
            <div className="h-[85%] border border-[#ababab] bg-white" />
          </div>
          <ScrollButton dir="down" label="下へスクロール" />
        </div>
      </main>
      <SheetTabs />
      <StatusBar />
      <ContextMenu />
      <StepMarker />
    </div>
  );
}
